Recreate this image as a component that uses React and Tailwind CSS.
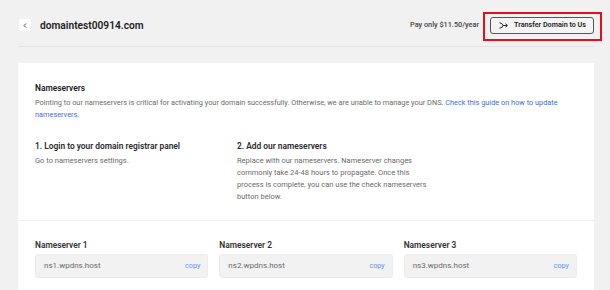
import React from "react";

function NsField({ label, value }) {
  return (
    <div className="flex flex-col">
      <div className="text-[8.4px] leading-[12px] font-semibold text-[#333]">{label}</div>
      <div className="mt-[3px] h-[24px] rounded-[3px] bg-[#f2f2f2] border border-[#ececec] flex items-center justify-between pl-[8px] pr-[7px]">
        <span className="text-[8px] text-[#6a6a6a]">{value}</span>
        <span className="text-[7.2px] text-[#6c8ef0]">copy</span>
      </div>
    </div>
  );
}

export default function App() {
  return (
    <div
      className="w-[610px] h-[290px] overflow-hidden bg-[#f1f1f1] pl-[18px] pr-[16px]"
      style={{ fontFamily: "Roboto, 'Liberation Sans', sans-serif" }}
    >
      <div className="flex items-center justify-between pt-[17px] pb-[12px] border-b border-[#e3e3e3]">
        <div className="flex items-center gap-[9px]">
          <div className="ml-[1px] w-[12px] h-[12px] rounded-[2px] bg-white flex items-center justify-center">
            <svg width="4" height="5" viewBox="0 0 4 5">
              <path d="M3 0.5 L1 2.5 L3 4.5" stroke="#444" strokeWidth="1" fill="none" />
            </svg>
          </div>
          <div className="text-[10.2px] font-semibold text-[#1d1d1d]">domaintest00914.com</div>
        </div>
        <div className="flex items-center gap-[11px]">
          <div className="text-[7.3px] font-medium text-[#444]">Pay only $11.50/year</div>
          <div className="relative">
            <div className="absolute -left-[7px] -right-[8px] -top-[5px] -bottom-[7px] border-2 border-[#e3101c]" />
            <button className="relative h-[17px] w-[104px] rounded-[3px] border border-[#555] bg-[#f4f4f4] flex items-center pl-[8px] gap-[6px]">
              <svg width="9" height="7" viewBox="0 0 9 7">
                <path d="M0.5 0.8 Q3.5 1 4 3.5 Q3.5 6 0.5 6.2" stroke="#222" strokeWidth="1" fill="none" />
                <path d="M4 3.5 H8.3 M6.5 1.8 L8.3 3.5 L6.5 5.2" stroke="#222" strokeWidth="1" fill="none" />
              </svg>
              <span className="text-[7.2px] font-semibold text-[#1d1d1d]">Transfer Domain to Us</span>
            </button>
          </div>
        </div>
      </div>

      <div className="mt-[16px] bg-white">
        <div className="px-[17px] pt-[19px] pb-[17px] border-b border-[#efefef]">
          <div className="text-[8.4px] leading-[12px] font-semibold text-[#1d1d1d]">Nameservers</div>
          <p className="mt-[3px] text-[7.35px] leading-[12px] text-[#6b6b6b] pr-[10px]">
            Pointing to our nameservers is critical for activating your domain successfully. Otherwise, we are unable to manage your DNS.{" "}
            <span className="text-[#3f6be8]">Check this guide on how to update nameservers.</span>
          </p>
          <div className="mt-[19px] flex">
            <div className="w-[202px]">
              <div className="text-[8.4px] leading-[12px] font-semibold text-[#2a2a2a]">1. Login to your domain registrar panel</div>
              <div className="mt-[3px] text-[7.5px] leading-[12px] text-[#6b6b6b]">Go to nameservers settings.</div>
            </div>
            <div className="w-[196px]">
              <div className="text-[8.4px] leading-[12px] font-semibold text-[#2a2a2a]">2. Add our nameservers</div>
              <div className="mt-[3px] text-[7.5px] leading-[12px] text-[#6b6b6b]">
                Replace with our nameservers. Nameserver changes commonly take 24-48 hours to propagate. Once this process is complete, you can use the check nameservers button below.
              </div>
            </div>
          </div>
        </div>
        <div className="px-[17px] pt-[18px] pb-[20px] grid grid-cols-3 gap-[11px]">
          <NsField label="Nameserver 1" value="ns1.wpdns.host" />
          <NsField label="Nameserver 2" value="ns2.wpdns.host" />
          <NsField label="Nameserver 3" value="ns3.wpdns.host" />
        </div>
      </div>
    </div>
  );
}
